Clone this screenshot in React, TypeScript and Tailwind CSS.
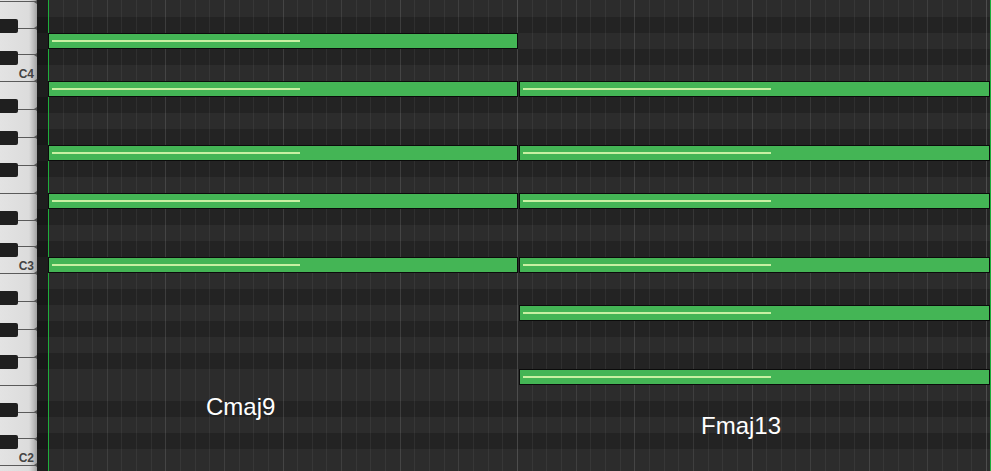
import React from "react";

const ROW_H = 16;
const TOP_MIDI = 65; // F4
const Y0 = -15;
const isBlack = (m: number) => [1, 3, 6, 8, 10].includes(((m % 12) + 12) % 12);
const rowTop = (m: number) => Y0 + (TOP_MIDI - m) * ROW_H;

const rows = Array.from({ length: 31 }, (_, i) => TOP_MIDI - i);
const blackRows = rows.filter(isBlack);

const whiteKeys = [
  "F4", "E4", "D4", "C4", "B3", "A3", "G3", "F3", "E3", "D3", "C3",
  "B2", "A2", "G2", "F2", "E2", "D2", "C2", "B1",
];

const cmaj9 = [62, 59, 55, 52, 48];
const fmaj13 = [59, 55, 52, 48, 45, 41];

const columns = Array.from({ length: 66 }, (_, i) => i + 1);

function lineClass(i: number) {
  if (i % 32 === 0) return "border-white/[0.16]";
  if (i % 8 === 0) return "border-white/[0.12]";
  if (i % 4 === 0) return "border-white/[0.09]";
  return "border-white/[0.055]";
}

function Note({ midi, left, width }: { midi: number; left: number; width: number }) {
  return (
    <div
      className="absolute h-[16px] border border-[#0b0b0b] bg-[#44b555]"
      style={{ top: rowTop(midi), left, width }}
    >
      <div className="absolute left-[3px] top-[6px] h-[2px] w-[248px] bg-[#c8f0a2]" />
    </div>
  );
}

export default function App() {
  return (
    <div className="relative flex h-[471px] w-[991px] overflow-hidden bg-[#232323] font-['Liberation_Sans',Arial,sans-serif]">
      {/* Keyboard */}
      <div className="relative w-[37px] shrink-0 overflow-hidden">
        <div className="-mt-[27px] flex flex-col">
          {whiteKeys.map((k) => (
            <div
              key={k}
              className={`relative flex shrink-0 items-end justify-end border-t border-[#5a5a5a] bg-[linear-gradient(90deg,#e3e3e3_0px,#dcdcdc_29px,#bababa_34px,#a0a0a0_37px)] pb-[1px] pr-[3px] ${
                "CDE".includes(k[0]) ? "h-[26.667px]" : "h-[28px]"
              }`}
            >
              {k[0] === "C" && (
                <span className="text-[12px] font-bold leading-none text-[#444444]">{k}</span>
              )}
              <div className="absolute -top-[2.5px] right-0 h-0 w-0 border-y-[2px] border-r-[3px] border-y-transparent border-r-[#555]" />
            </div>
          ))}
        </div>
        {blackRows.map((m) => (
          <div
            key={m}
            className="absolute left-0 h-[14px] w-[18px] rounded-r-[2px] bg-[#1f1f1f]"
            style={{ top: rowTop(m) + 2 }}
          />
        ))}
      </div>

      {/* Grid area */}
      <div className="relative flex-1 overflow-hidden">
        <div className="-mt-[15px] flex flex-col">
          {rows.map((m) => (
            <div
              key={m}
              className={`h-[16px] shrink-0 ${isBlack(m) ? "bg-[#232323]" : "bg-[#2c2c2c]"}`}
            />
          ))}
        </div>
        <div className="absolute inset-0 flex">
          <div className="w-[11px] shrink-0 bg-black/30" />
          <div className="flex flex-1 overflow-hidden border-x border-[#1fae3b]">
            <div className="w-[13.6667px] shrink-0" />
            {columns.map((i) => (
              <div key={i} className={`h-full w-[14.6667px] shrink-0 border-l ${lineClass(i)}`} />
            ))}
          </div>
        </div>
      </div>

      {/* Notes */}
      {cmaj9.map((m) => (
        <Note key={"c" + m} midi={m} left={48} width={470} />
      ))}
      {fmaj13.map((m) => (
        <Note key={"f" + m} midi={m} left={519} width={471} />
      ))}

      {/* Chord labels */}
      <div className="absolute left-[206px] top-[395px] text-[24px] leading-none text-white">Cmaj9</div>
      <div className="absolute left-[701px] top-[414px] text-[24px] leading-none text-white">Fmaj13</div>
    </div>
  );
}
